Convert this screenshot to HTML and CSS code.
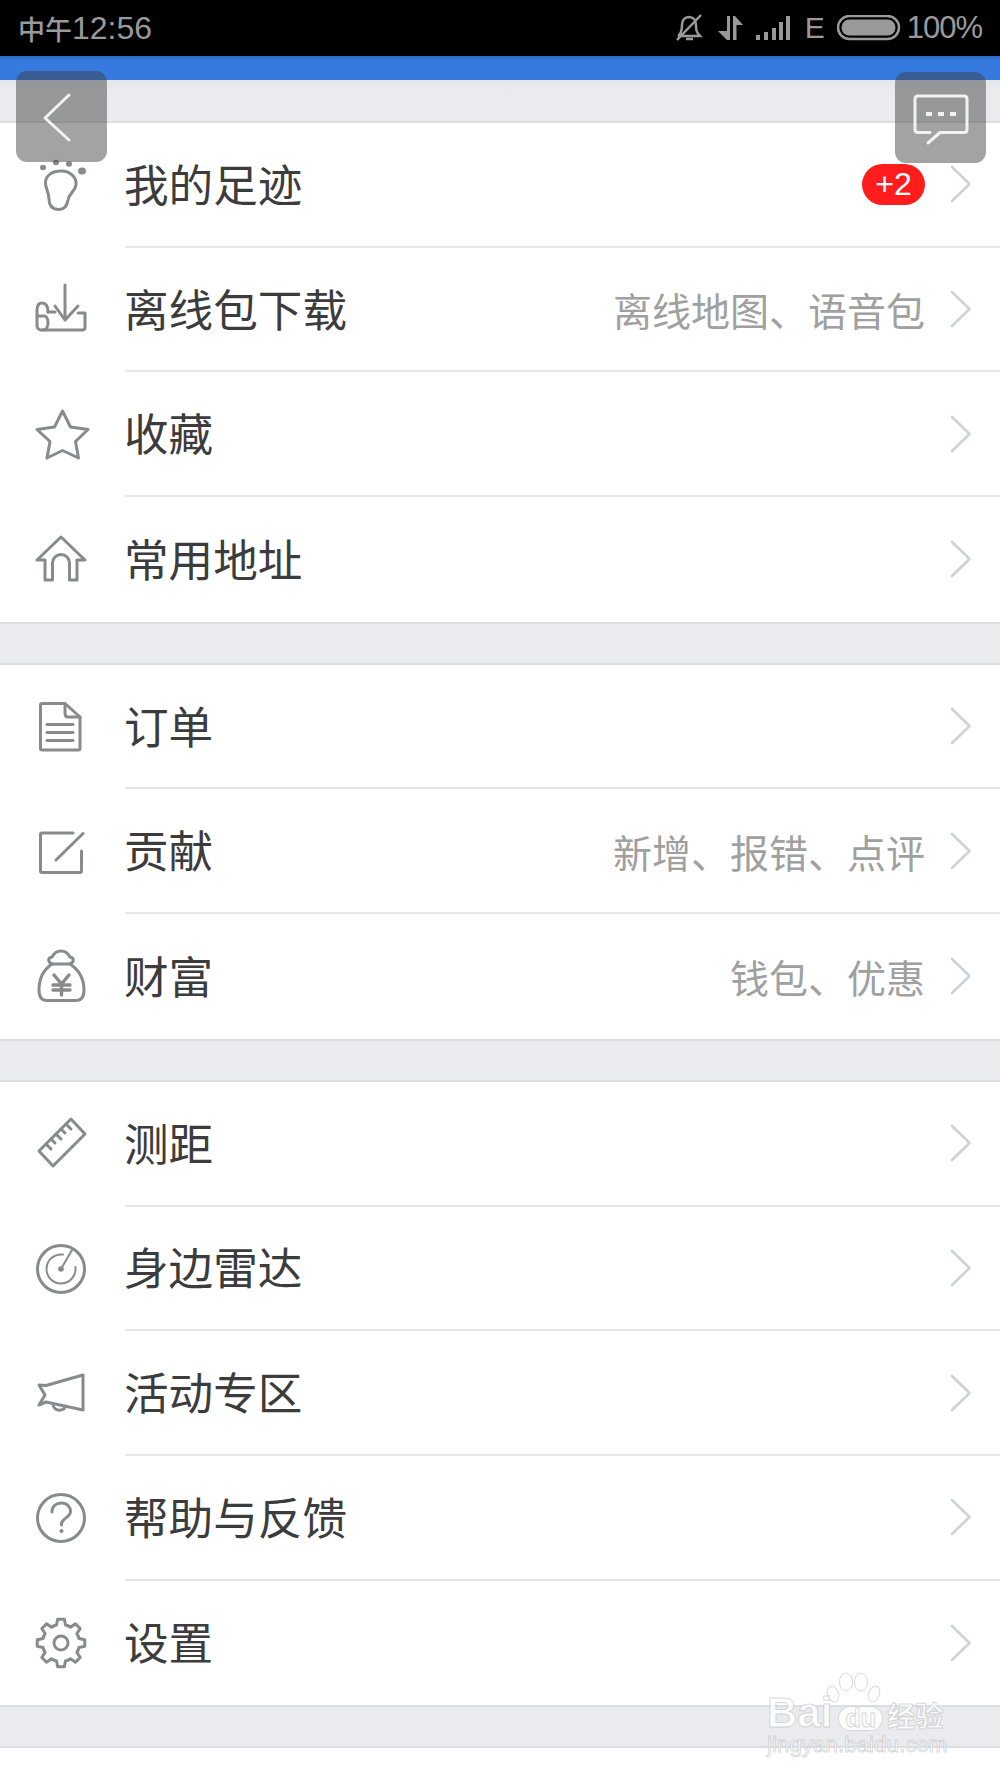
FILE: index.html
```html
<!DOCTYPE html>
<html lang="zh-CN">
<head>
  <meta charset="UTF-8">
  <meta name="viewport" content="width=device-width, initial-scale=1.0">
  <title>我的</title>
  <link rel="stylesheet" href="styles.css">
</head>
<body>

  <!-- Status bar -->
  <div class="status-bar">
    <span class="status-time"><span class="status-noon">中午</span>12:56</span>
    <div class="status-icons">
      <svg class="bell" width="30" height="30" viewBox="0 0 30 30">
        <path d="M5 22 C8 19 8 16 8 12 C8 7 11 4 15 4 C19 4 22 7 22 12 C22 16 22 19 26 23 H5 Z M12 26 H19 M3 27 L27 2"/>
      </svg>
      <svg class="updown" width="26" height="26" viewBox="0 0 26 26">
        <path class="solid" d="M10 1 H13 V25 H10 L1 16 H10 Z M16 25 V1 H18 L26 10 H19.500 V25 Z"/>
      </svg>
      <svg class="signal" width="36" height="26" viewBox="0 0 36 26">
        <path class="solid" d="M1 20 H5 V25 H1 Z M9 17 H13 V25 H9 Z M17 13 H21 V25 H17 Z M24 7 H28 V25 H24 Z M31 1 H35 V25 H31 Z"/>
      </svg>
      <span class="status-e">E</span>
      <svg class="battery" width="64" height="26" viewBox="0 0 64 26">
        <rect class="battery-shell" x="1" y="1" width="61" height="23" rx="11.500"/>
        <rect class="solid" x="4.500" y="4.500" width="54" height="16" rx="8"/>
      </svg>
      <span class="status-pct">100%</span>
    </div>
  </div>
  <div class="blue-bar"></div>
  <div class="gap gap-top"></div>

  <section class="group">
    <div class="row">
      <div class="row-icon">
        <svg width="60" height="60" viewBox="0 0 60 60">
          <path d="M29 16 C38 15 46 22 45 30 C44 37 38 38 37 45 C36 51 33 55 27 54.500 C21 54 18 50 18 44 C18 37 14 33 14.500 27 C15 20 22 16 29 16 Z"/>
          <ellipse class="solid" cx="12" cy="12.500" rx="3" ry="2.800"/>
          <ellipse class="solid" cx="25" cy="7.500" rx="3" ry="2.800"/>
          <ellipse class="solid" cx="38" cy="9" rx="3" ry="2.800"/>
          <ellipse class="solid" cx="51" cy="16" rx="4" ry="3.500"/>
        </svg>
      </div>
      <div class="row-body">
        <span class="row-title">我的足迹</span>
        <span class="badge">+2</span>
        <svg class="chevron" width="22" height="38" viewBox="0 0 22 38"><path d="M2 2 L19.500 19 L2 36"/></svg>
      </div>
    </div>
    <div class="row">
      <div class="row-icon">
        <svg width="60" height="60" viewBox="0 0 60 60">
          <path d="M34 5 V40 M24 26 L34 40 L47 26"/>
          <path d="M17 32 C17 26 15 23 11 23 C7 23 6 27 6 30 V46 C6 48 8 50 10 50 H51 C53 50 54 49 54 47 V33 H47"/>
          <path d="M17 32 H24 M6 36 H13 C16 36 17 40 17 43 C17 47 15 50 12 50"/>
        </svg>
      </div>
      <div class="row-body">
        <span class="row-title">离线包下载</span>
        <span class="row-note">离线地图、语音包</span>
        <svg class="chevron" width="22" height="38" viewBox="0 0 22 38"><path d="M2 2 L19.500 19 L2 36"/></svg>
      </div>
    </div>
    <div class="row">
      <div class="row-icon">
        <svg width="60" height="60" viewBox="0 0 60 60">
          <path d="M31.500 6 L39.500 22 L57 24.500 L44.500 36.500 L47.500 53 L31.500 45.500 L16 53 L19 36.500 L6 24.500 L23.500 22 Z"/>
        </svg>
      </div>
      <div class="row-body">
        <span class="row-title">收藏</span>
        <svg class="chevron" width="22" height="38" viewBox="0 0 22 38"><path d="M2 2 L19.500 19 L2 36"/></svg>
      </div>
    </div>
    <div class="row">
      <div class="row-icon">
        <svg width="60" height="60" viewBox="0 0 60 60">
          <path d="M30 8 L54 31 H46 V51 H38.500 V34 A8.500 8.500 0 0 0 21.500 34 V51 H14 V31 H6 Z"/>
        </svg>
      </div>
      <div class="row-body">
        <span class="row-title">常用地址</span>
        <svg class="chevron" width="22" height="38" viewBox="0 0 22 38"><path d="M2 2 L19.500 19 L2 36"/></svg>
      </div>
    </div>
  </section>

  <div class="gap"></div>

  <section class="group">
    <div class="row">
      <div class="row-icon">
        <svg width="60" height="60" viewBox="0 0 60 60">
          <path d="M34 6.500 H11 C10 6.500 9.500 7 9.500 8 V51.500 C9.500 52.500 10 53 11 53 H47.500 C48.500 53 49 52.500 49 51.500 V20 Z"/>
          <path d="M34 6.500 V16 C34 18 35 20 37 20 H49"/>
          <path d="M16 27.500 H42 M16 35.500 H42 M16 43.500 H42"/>
        </svg>
      </div>
      <div class="row-body">
        <span class="row-title">订单</span>
        <svg class="chevron" width="22" height="38" viewBox="0 0 22 38"><path d="M2 2 L19.500 19 L2 36"/></svg>
      </div>
    </div>
    <div class="row">
      <div class="row-icon">
        <svg width="60" height="60" viewBox="0 0 60 60">
          <path d="M42 11 H11 C10 11 9.500 11.500 9.500 12.500 V49 C9.500 50 10 50.500 11 50.500 H49 C50 50.500 50.500 50 50.500 49 V29"/>
          <path d="M25 38 L52 11.500"/>
        </svg>
      </div>
      <div class="row-body">
        <span class="row-title">贡献</span>
        <span class="row-note">新增、报错、点评</span>
        <svg class="chevron" width="22" height="38" viewBox="0 0 22 38"><path d="M2 2 L19.500 19 L2 36"/></svg>
      </div>
    </div>
    <div class="row">
      <div class="row-icon">
        <svg width="60" height="60" viewBox="0 0 60 60">
          <path d="M22 18 C17 17 16 12 21 11 C23 7 27 5 30 5 C33 5 37 7 39 11 C44 12 43 17 38 18 Z"/>
          <path d="M21 18 C12 24 8 33 8 44 C8 51 11 54.500 16 54.500 H45 C50 54.500 53 51 53 44 C53 33 48 24 39 18"/>
          <path class="thick" d="M23 29 L30.500 38 L38 29 M30.500 38 V49 M22 39 H39 M22 44 H39"/>
        </svg>
      </div>
      <div class="row-body">
        <span class="row-title">财富</span>
        <span class="row-note">钱包、优惠</span>
        <svg class="chevron" width="22" height="38" viewBox="0 0 22 38"><path d="M2 2 L19.500 19 L2 36"/></svg>
      </div>
    </div>
  </section>

  <div class="gap"></div>

  <section class="group">
    <div class="row">
      <div class="row-icon">
        <svg width="60" height="60" viewBox="0 0 60 60">
          <path d="M40 5 L54 20 L22 52 L8 37 Z"/>
          <path d="M35 10 L40 15 M30 15 L34 19 M25 20 L30 25 M20 25 L24 29 M15 30 L20 35"/>
        </svg>
      </div>
      <div class="row-body">
        <span class="row-title">测距</span>
        <svg class="chevron" width="22" height="38" viewBox="0 0 22 38"><path d="M2 2 L19.500 19 L2 36"/></svg>
      </div>
    </div>
    <div class="row">
      <div class="row-icon">
        <svg width="60" height="60" viewBox="0 0 60 60">
          <circle cx="30" cy="30" r="23.500"/>
          <path class="thin" d="M32 15.600 A14.500 14.500 0 1 0 44.400 28"/>
          <circle class="solid" cx="30" cy="30" r="2.800"/>
          <path class="thin" d="M30 30 L41 11"/>
        </svg>
      </div>
      <div class="row-body">
        <span class="row-title">身边雷达</span>
        <svg class="chevron" width="22" height="38" viewBox="0 0 22 38"><path d="M2 2 L19.500 19 L2 36"/></svg>
      </div>
    </div>
    <div class="row">
      <div class="row-icon">
        <svg width="60" height="60" viewBox="0 0 60 60">
          <path d="M8 21 L15 21.500 L52 11 V46 L15 38 L8 41 L14 31 Z"/>
          <path d="M22 39.500 C22 48 34 48 34 42"/>
        </svg>
      </div>
      <div class="row-body">
        <span class="row-title">活动专区</span>
        <svg class="chevron" width="22" height="38" viewBox="0 0 22 38"><path d="M2 2 L19.500 19 L2 36"/></svg>
      </div>
    </div>
    <div class="row">
      <div class="row-icon">
        <svg width="60" height="60" viewBox="0 0 60 60">
          <circle cx="30" cy="30" r="23.500"/>
          <path d="M21 24 C21 18 25 15 30.500 15 C36 15 39.500 19 39.500 23.500 C39.500 29 32 30 30.500 35 V37"/>
          <circle class="solid" cx="30.500" cy="43" r="2"/>
        </svg>
      </div>
      <div class="row-body">
        <span class="row-title">帮助与反馈</span>
        <svg class="chevron" width="22" height="38" viewBox="0 0 22 38"><path d="M2 2 L19.500 19 L2 36"/></svg>
      </div>
    </div>
    <div class="row">
      <div class="row-icon">
        <svg width="60" height="60" viewBox="-30 -30 60 60">
          <defs>
            <path id="gear-tooth" d="M-7.080 -17.090 L-4.480 -17.950 L-3.340 -23.770 L3.340 -23.770 L4.480 -17.950 L7.080 -17.090"/>
          </defs>
          <use href="#gear-tooth"/>
          <use href="#gear-tooth" transform="rotate(45)"/>
          <use href="#gear-tooth" transform="rotate(90)"/>
          <use href="#gear-tooth" transform="rotate(135)"/>
          <use href="#gear-tooth" transform="rotate(180)"/>
          <use href="#gear-tooth" transform="rotate(225)"/>
          <use href="#gear-tooth" transform="rotate(270)"/>
          <use href="#gear-tooth" transform="rotate(315)"/>
          <circle cx="0" cy="0" r="7"/>
        </svg>
      </div>
      <div class="row-body">
        <span class="row-title">设置</span>
        <svg class="chevron" width="22" height="38" viewBox="0 0 22 38"><path d="M2 2 L19.500 19 L2 36"/></svg>
      </div>
    </div>
  </section>

  <div class="gap"></div>

  <!-- Floating buttons -->
  <div class="float-btn float-back">
    <svg width="91" height="91" viewBox="0 0 91 91">
      <path d="M53 24 L29 47 L53 69"/>
    </svg>
  </div>
  <div class="float-btn float-chat">
    <svg width="91" height="91" viewBox="0 0 91 91">
      <path d="M35 60.500 H23 C21 60.500 20 59.500 20 57.500 V27 C20 25 21 24 23 24 H69 C71 24 72 25 72 27 V57.500 C72 59.500 71 60.500 69 60.500 H45 L33 71"/>
      <path class="dots" d="M31 42 H37 M43 42 H49 M55 42 H61"/>
    </svg>
  </div>

  <!-- Watermark -->
  <div class="watermark">
    <svg class="paw" width="56" height="42" viewBox="0 0 56 42">
      <ellipse cx="7" cy="22" rx="5.500" ry="8" transform="rotate(-20 7 22)"/>
      <ellipse cx="20" cy="10" rx="6.500" ry="9"/>
      <ellipse cx="35" cy="10" rx="6.500" ry="9"/>
      <ellipse cx="48" cy="22" rx="5.500" ry="8" transform="rotate(20 48 22)"/>
    </svg>
    <div class="wm-line">
      <span class="wm-bai">Bai</span>
      <span class="wm-du">du</span>
      <span class="wm-cn">经验</span>
    </div>
    <div class="wm-url">jingyan.baidu.com</div>
  </div>

</body>
</html>
```

FILE: styles.css
```css
* {
  box-sizing: border-box;
}

html, body {
  margin: 0;
  height: 1778px;
  overflow: hidden;
}

body {
  position: relative;
  background: #fff;
  font-family: "Noto Sans CJK SC", "Liberation Sans", sans-serif;
  color: #3c3c3c;
}

/* Status bar */
.status-bar {
  height: 56px;
  background: #000;
  color: #9a9a9a;
  display: flex;
  justify-content: space-between;
  align-items: center;
  padding: 0 18px;
}

.status-time {
  font-family: "Liberation Sans", "Noto Sans CJK SC", sans-serif;
  font-size: 32px;
  display: flex;
  align-items: center;
}

.status-noon {
  font-size: 27px;
  font-weight: 500;
}

.status-icons {
  display: flex;
  align-items: center;
  font-family: "Liberation Sans", sans-serif;
  font-size: 31px;
}

.status-icons svg {
  display: block;
  fill: none;
  stroke: #9a9a9a;
  stroke-width: 2.5;
}

.status-icons .solid {
  fill: #9a9a9a;
  stroke: none;
}

.updown {
  margin-left: 13px;
}

.signal {
  margin-left: 12px;
}

.status-e {
  margin-left: 14px;
  font-size: 30px;
}

.battery {
  margin-left: 12px;
}

.status-pct {
  margin-left: 6px;
  letter-spacing: -1px;
}

.blue-bar {
  height: 24px;
  background: linear-gradient(#2f6cc8, #367ae0 25%, #367ae0);
}

.gap {
  height: 43px;
  background: #e9ebef;
  border-top: 2px solid #dcdee2;
  border-bottom: 2px solid #dcdee2;
}

.gap-top {
  border-top: none;
  background: linear-gradient(#e4e6ec, #e9ebef 30%);
}

/* List rows */
.group {
  background: #fff;
}

.row {
  display: flex;
  height: 124.7px;
}

.row-icon {
  width: 125px;
  flex: none;
  display: flex;
  align-items: center;
  padding-left: 31px;
}

.row-icon svg {
  display: block;
  fill: none;
  stroke: #888a8e;
  stroke-width: 3;
  stroke-linejoin: round;
  stroke-linecap: round;
}

.row-icon .solid {
  fill: #888a8e;
  stroke: none;
}

.row-icon .thin {
  stroke-width: 2;
}

.row-icon .thick {
  stroke-width: 3.4;
}

.row-body {
  flex: 1;
  display: flex;
  align-items: center;
  padding-right: 28px;
  border-bottom: 2px solid #e6e7ea;
}

.row:last-child .row-body {
  border-bottom: none;
}

.row-title {
  font-size: 44.6px;
  flex: 1;
  margin-left: -1px;
  margin-bottom: 4px;
}

.row-note {
  font-size: 39px;
  color: #a0a0a0;
  margin-right: 25px;
}

.badge {
  width: 63px;
  height: 41px;
  border-radius: 21px;
  background: #ff1c1c;
  color: #fff;
  font-family: "Liberation Sans", sans-serif;
  font-size: 32px;
  line-height: 41px;
  text-align: center;
  margin-right: 25px;
}

.chevron {
  flex: none;
  fill: none;
  stroke: #cfd1d8;
  stroke-width: 2.6;
  stroke-linecap: round;
  stroke-linejoin: round;
}

/* Floating buttons */
.float-btn {
  position: absolute;
  width: 91px;
  height: 91px;
  border-radius: 11px;
  background: rgba(60, 60, 60, 0.47);
}

.float-btn svg {
  display: block;
  fill: none;
  stroke: #f2f2f2;
  stroke-width: 3;
  stroke-linecap: round;
  stroke-linejoin: round;
}

.float-btn .dots {
  stroke-width: 4;
  stroke-linecap: butt;
}

.float-back {
  left: 16px;
  top: 71px;
}

.float-chat {
  left: 895px;
  top: 72px;
}

/* Watermark */
.watermark {
  position: absolute;
  left: 767px;
  top: 1672px;
  width: 182px;
  height: 86px;
  color: rgba(255, 255, 255, 0.85);
  font-family: "Liberation Sans", sans-serif;
  -webkit-text-stroke: 1px rgba(170, 170, 170, 0.45);
}

.paw {
  position: absolute;
  left: 59px;
  top: 0;
  fill: rgba(255, 255, 255, 0.85);
  stroke: rgba(170, 170, 170, 0.45);
  stroke-width: 1;
}

.wm-line {
  position: absolute;
  left: 0;
  top: 22px;
  height: 38px;
  line-height: 38px;
  display: flex;
  align-items: baseline;
  white-space: nowrap;
}

.wm-bai {
  font-size: 42px;
  font-weight: bold;
}

.wm-du {
  width: 45px;
  height: 25px;
  margin-left: 6px;
  border-radius: 13px;
  font-size: 25px;
  font-weight: bold;
  line-height: 22px;
  text-align: center;
  background: rgba(255, 255, 255, 0.85);
  border: 1px solid rgba(170, 170, 170, 0.45);
}

.wm-cn {
  font-family: "Noto Sans CJK SC", sans-serif;
  font-size: 28px;
  font-weight: bold;
  margin-left: 4px;
}

.wm-url {
  position: absolute;
  left: 0;
  top: 60px;
  font-size: 22.4px;
  line-height: 26px;
  white-space: nowrap;
}
```
